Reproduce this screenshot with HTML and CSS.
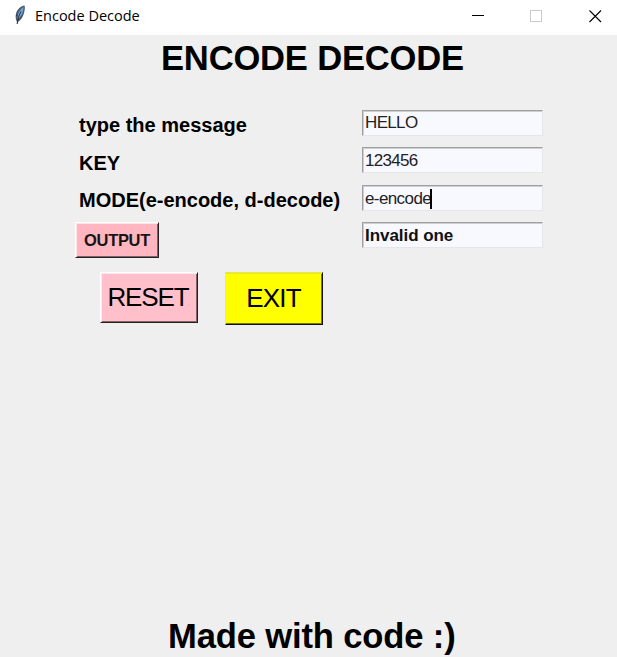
FILE: index.html
```html
<!DOCTYPE html>
<html lang="en">
<head>
<meta charset="utf-8">
<title>Encode Decode</title>
<link rel="stylesheet" href="styles.css">
</head>
<body>
<header class="titlebar">
  <svg class="feather" width="12" height="20" viewBox="0 0 12 20">
    <path d="M10.5 0.5C7 1 3.5 4 2.2 8C1.2 11 1.5 14 3 17L3.2 19.5L4 17C7 15 9 12 10 8C10.8 5 11.2 2 10.5 0.5Z" fill="#4a5866"/>
    <path d="M9.6 2C6 4 3.5 8 3.3 14C7.5 12 9.5 7 9.6 2Z" fill="#6ea3da"/>
    <path d="M3.1 19C3.8 14 5 10 7 6.5M2.2 10L3.6 11" fill="none" stroke="#1d2733" stroke-width=".9"/>
  </svg>
  <span class="caption">Encode Decode</span>
  <svg class="controls" width="132" height="14" viewBox="0 0 132 14" fill="none" shape-rendering="crispEdges">
    <path d="M0 6.5H12" stroke="#000"/>
    <rect x="58.5" y="1.5" width="11" height="11" stroke="#ccc"/>
    <path d="M117.5 1.5L129 13M129 1.5L117.5 13" stroke="#000" stroke-width="1.1" shape-rendering="auto"/>
  </svg>
</header>
<main class="window">
  <h1 class="heading">ENCODE DECODE</h1>
  <section class="form">
    <span class="label">type the message</span><div class="entry">HELLO</div>
    <span class="label key">KEY</span><div class="entry digits">123456</div>
    <span class="label">MODE(e-encode, d-decode)</span><div class="entry mode">e-encode<i class="caret"></i></div>
    <button class="button output">OUTPUT</button><div class="entry result">Invalid one</div>
  </section>
  <div class="actions">
    <button class="button reset">RESET</button>
    <button class="button exit">EXIT</button>
  </div>
  <footer class="footer">Made with code :)</footer>
</main>
</body>
</html>
```
FILE: styles.css
```css
* { box-sizing: border-box; }
body {
  margin: 0;
  height: 657px;
  display: flex;
  flex-direction: column;
  overflow: hidden;
  background: #efefef;
  color: #000;
  font-family: "Liberation Sans", Arial, sans-serif;
}
.titlebar {
  height: 35px;
  flex: none;
  display: flex;
  align-items: flex-start;
  background: #fff;
  padding-left: 14px;
}
.feather { margin-top: 5px; }
.caption {
  margin: 6px 0 0 9px;
  font: 14.5px/20px "Open Sans", sans-serif;
  white-space: nowrap;
}
.controls { margin: 9px 13px 0 auto; }
.window {
  flex: 1;
  display: flex;
  flex-direction: column;
}
.heading {
  margin: 3px 0 0 161px;
  font-size: 34.6px;
  line-height: 40px;
  font-weight: bold;
  letter-spacing: -0.2px;
  white-space: nowrap;
}
.form {
  margin: 32px 0 0 75px;
  display: grid;
  grid-template-columns: 287px 181px;
  grid-template-rows: 37px 38px 37px 37px;
}
.label {
  padding: 3px 0 0 4px;
  font-size: 20px;
  line-height: 24px;
  font-weight: bold;
  white-space: nowrap;
}
.key { padding-top: 4px; }
.entry {
  height: 26px;
  display: flex;
  align-items: center;
  background: #f8f8ff;
  border: 1px solid;
  border-color: #a0a0a0 #e6e6ea #e6e6ea #a0a0a0;
  box-shadow: inset 1px 1px #cdcdd2;
  padding: 0 0 0 2px;
  color: #222;
  font-size: 17px;
  line-height: 20px;
  letter-spacing: -0.65px;
  white-space: nowrap;
}
.digits, .mode, .result { padding-top: 1px; }
.digits { letter-spacing: -0.7px; }
.mode { letter-spacing: -0.6px; }
.caret {
  width: 2px;
  height: 20px;
  margin-left: -1px;
  background: #000;
}
.result {
  color: #111;
  font-weight: bold;
  letter-spacing: -0.05px;
}
.button {
  border: 1px solid;
  border-color: #fff #222 #222 #fff;
  border-radius: 0;
  padding: 0;
  color: #000;
  font-family: inherit;
  white-space: nowrap;
}
.output {
  width: 84px;
  height: 36px;
  background: #ffb6c1;
  box-shadow: inset 1px 1px #ffe3e7, inset -1px -1px #806066;
  color: #161616;
  font-size: 16.5px;
  font-weight: bold;
  letter-spacing: -0.3px;
}
.actions {
  display: flex;
  align-items: flex-start;
  gap: 27px;
  margin: 13px 0 0 100px;
}
.reset {
  width: 98px;
  height: 51px;
  background: #ffc0cb;
  box-shadow: inset 1px 1px #ffe8ec, inset -1px -1px #856469;
  padding-right: 2px;
  font-size: 26px;
  letter-spacing: -1.1px;
}
.exit {
  width: 98px;
  height: 53px;
  background: #ff0;
  border-color: #e3e36a #111 #111 #f0f040;
  box-shadow: inset 0 1px #eded00, inset -1px -1px #77770a;
  padding-right: 1px;
  font-size: 26px;
  letter-spacing: -0.8px;
}
.footer {
  margin: auto 0 1px 168px;
  font-size: 34.6px;
  line-height: 40px;
  font-weight: bold;
  letter-spacing: -0.15px;
  white-space: nowrap;
}
```
